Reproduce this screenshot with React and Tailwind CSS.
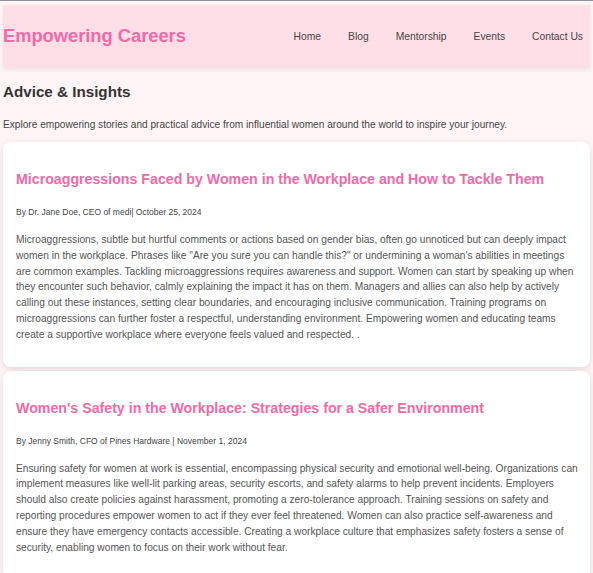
import React from 'react';

const navLinks = ['Home', 'Blog', 'Mentorship', 'Events', 'Contact Us'];

const articles = [
  {
    title: 'Microaggressions Faced by Women in the Workplace and How to Tackle Them',
    meta: 'By Dr. Jane Doe, CEO of medi| October 25, 2024',
    body: 'Microaggressions, subtle but hurtful comments or actions based on gender bias, often go unnoticed but can deeply impact women in the workplace. Phrases like "Are you sure you can handle this?" or undermining a woman\'s abilities in meetings are common examples. Tackling microaggressions requires awareness and support. Women can start by speaking up when they encounter such behavior, calmly explaining the impact it has on them. Managers and allies can also help by actively calling out these instances, setting clear boundaries, and encouraging inclusive communication. Training programs on microaggressions can further foster a respectful, understanding environment. Empowering women and educating teams create a supportive workplace where everyone feels valued and respected. .',
  },
  {
    title: "Women's Safety in the Workplace: Strategies for a Safer Environment",
    meta: 'By Jenny Smith, CFO of Pines Hardware | November 1, 2024',
    body: 'Ensuring safety for women at work is essential, encompassing physical security and emotional well-being. Organizations can implement measures like well-lit parking areas, security escorts, and safety alarms to help prevent incidents. Employers should also create policies against harassment, promoting a zero-tolerance approach. Training sessions on safety and reporting procedures empower women to act if they ever feel threatened. Women can also practice self-awareness and ensure they have emergency contacts accessible. Creating a workplace culture that emphasizes safety fosters a sense of security, enabling women to focus on their work without fear.',
  },
];

const App = () => {
  return (
    <div className="min-h-screen bg-[#fff5f6] font-['Liberation_Sans',Arial,sans-serif]">
      <div className="h-[1px] bg-[#8e929b]"></div>
      <div className="px-[3px] pt-[4px]">
        {/* Header */}
        <header className="h-[63px] bg-[#ffdfe7] flex items-center justify-between pr-[7px] shadow-[0_2px_4px_rgba(0,0,0,0.08)]">
          <h1 className="text-[18.3px] font-bold text-[#f06aa6] leading-none">Empowering Careers</h1>
          <nav className="flex gap-[27px]">
            {navLinks.map(link => (
              <a key={link} href="#" className="text-[10.3px] text-[#444]">
                {link}
              </a>
            ))}
          </nav>
        </header>

        {/* Intro */}
        <h2 className="mt-[15px] text-[15.2px] leading-[18px] font-bold text-[#333]">Advice &amp; Insights</h2>
        <p className="mt-[17px] text-[10.15px] leading-[13px] text-[#444]">
          Explore empowering stories and practical advice from influential women around the world to inspire your journey.
        </p>

        {/* Articles */}
        <div className="mt-[11px] flex flex-col gap-[4px]">
          {articles.map((article, index) => (
            <div key={index} className="bg-white rounded-[8px] shadow-[0_2px_6px_rgba(0,0,0,0.12)] pt-[29px] pl-[13px] pr-[10px] pb-[24px]">
              <h3 className="text-[14.2px] leading-[17px] font-bold text-[#f06aa6]">{article.title}</h3>
              <p className="mt-[18px] text-[8.5px] leading-[12px] text-[#444]">{article.meta}</p>
              <p className="mt-[14px] text-[10.2px] leading-[15.8px] text-[#555]">{article.body}</p>
            </div>
          ))}
        </div>
      </div>
    </div>
  );
};

export default App;
